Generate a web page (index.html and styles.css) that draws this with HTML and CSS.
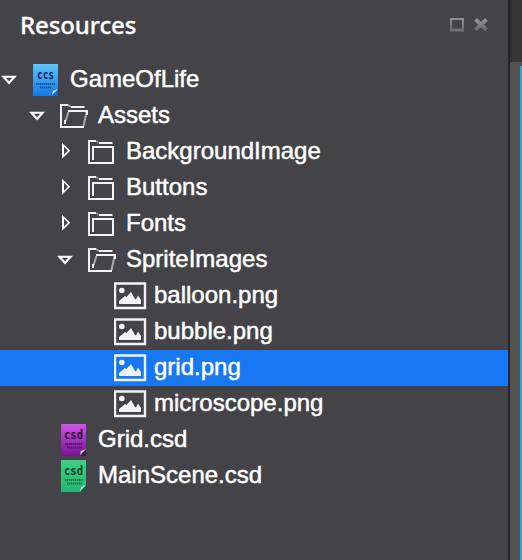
FILE: index.html
```html
<!DOCTYPE html>
<html lang="en">
<head>
<meta charset="utf-8">
<title>Resources</title>
<link rel="stylesheet" href="styles.css">
</head>
<body>
<svg width="0" height="0" class="defs">
  <defs>
    <linearGradient id="blue" x2="0" y2="1"><stop stop-color="#5cc5fa"/><stop offset="1" stop-color="#1478e0"/></linearGradient>
    <linearGradient id="purple" x2="0" y2="1"><stop stop-color="#cf55e8"/><stop offset="1" stop-color="#751393"/></linearGradient>
    <linearGradient id="green" x2="0" y2="1"><stop stop-color="#3ecf85"/><stop offset="1" stop-color="#22b873"/></linearGradient>
    <linearGradient id="metal" x2="0" y2="1"><stop stop-color="#929294"/><stop offset="1" stop-color="#6a6a6c"/></linearGradient>
    <symbol id="open" viewBox="0 0 30 36"><path d="M1 13.8H17L9 22.4Z" fill="#fff"/><path d="M5.8 15.8H12.2L9 19.3Z" fill="#444347"/></symbol>
    <symbol id="closed" viewBox="0 0 30 36"><path d="M6 8.7V24.7L14.2 16.7Z" fill="#fff"/><path d="M8 12.6V20.8L11.8 16.7Z" fill="#444347"/></symbol>
    <symbol id="folder" viewBox="0 0 40 36"><path d="M10 7L13 9" stroke="#8d8c90" stroke-width="2"/><path d="M26.5 9H13M10 7H3V29H27V13H7V26" fill="none" stroke="#f3f2f6" stroke-width="2"/></symbol>
    <symbol id="folder-open" viewBox="0 0 40 36"><path d="M10 7L13 9M7.5 23L10.5 14M28.6 14L25.5 28" fill="none" stroke="#a9a8ac" stroke-width="2"/><path d="M26.5 9H13M10 7H3V29H26M10 13H30M29 13V17M7 22V26" fill="none" stroke="#f3f2f6" stroke-width="2"/></symbol>
    <symbol id="picture" viewBox="0 0 40 36"><path d="M1 5.5H31V30H1Z" fill="none" stroke="#f3f2f6" stroke-width="2.4"/><circle cx="7.8" cy="12.5" r="2.8" fill="#f3f2f6"/><path d="M5 26V23L11 18L12.5 19L17 14L21 21L22 21.5L24 17.5L27 22V26Z" fill="#f3f2f6"/></symbol>
  </defs>
</svg>
<div class="app">
  <section class="panel">
    <header class="head">
      <h1>Resources</h1>
      <svg class="tools" width="42" height="18" viewBox="0 0 42 18">
        <path d="M1 2H13V13H1Z" fill="none" stroke="url(#metal)" stroke-width="2"/><path d="M0 13H14" stroke="#707072" stroke-width="3"/>
        <path d="M26 3.5L36 13.5M36 3.5L26 13.5" stroke="#353437" stroke-width="4"/>
        <path d="M25.5 2.5L36.5 13M36.5 2.5L25.5 13" stroke="url(#metal)" stroke-width="4"/>
      </svg>
    </header>
    <ul class="tree">
      <li class="row d0"><svg class="toggle"><use href="#open"/></svg><svg class="icon" viewBox="0 0 40 36"><path fill="url(#blue)" d="M3 2H28V34H3Z"/><text class="tag ccs" x="7" y="17" textLength="17" lengthAdjust="spacingAndGlyphs">ccs</text><path class="lines" stroke="#0c55a7" d="M6 22H25M10 25.5H21"/><path fill="#116bcc" d="M22 34L28 27V34Z"/><path fill="#d8f0ff" d="M22 33L23 29L28 27Z"/></svg><span>GameOfLife</span></li>
      <li class="row d1"><svg class="toggle"><use href="#open"/></svg><svg class="icon"><use href="#folder-open"/></svg><span>Assets</span></li>
      <li class="row d2"><svg class="toggle"><use href="#closed"/></svg><svg class="icon"><use href="#folder"/></svg><span>BackgroundImage</span></li>
      <li class="row d2"><svg class="toggle"><use href="#closed"/></svg><svg class="icon"><use href="#folder"/></svg><span>Buttons</span></li>
      <li class="row d2"><svg class="toggle"><use href="#closed"/></svg><svg class="icon"><use href="#folder"/></svg><span>Fonts</span></li>
      <li class="row d2"><svg class="toggle"><use href="#open"/></svg><svg class="icon"><use href="#folder-open"/></svg><span>SpriteImages</span></li>
      <li class="row d3"><svg class="toggle"></svg><svg class="icon"><use href="#picture"/></svg><span>balloon.png</span></li>
      <li class="row d3"><svg class="toggle"></svg><svg class="icon"><use href="#picture"/></svg><span>bubble.png</span></li>
      <li class="row d3 selected"><svg class="toggle"></svg><svg class="icon"><use href="#picture"/></svg><span>grid.png</span></li>
      <li class="row d3"><svg class="toggle"></svg><svg class="icon"><use href="#picture"/></svg><span>microscope.png</span></li>
      <li class="row d1"><svg class="toggle"></svg><svg class="icon" viewBox="0 0 40 36"><path fill="url(#purple)" d="M3 2H28V34H3Z"/><text class="tag" x="6" y="17" textLength="19" lengthAdjust="spacingAndGlyphs">csd</text><path class="lines" stroke="#5b1470" d="M7 22H25M9 25.5H24"/><path fill="#3c1748" d="M22 34L28 27V34Z"/><path fill="#efd9f5" d="M22 33L23 29L28 27Z"/></svg><span>Grid.csd</span></li>
      <li class="row d1"><svg class="toggle"></svg><svg class="icon" viewBox="0 0 40 36"><path fill="url(#green)" d="M3 2H28V34H3Z"/><text class="tag csd-green" x="6" y="17" textLength="19" lengthAdjust="spacingAndGlyphs">csd</text><path class="lines" stroke="#16774c" d="M7 22H25M9 25.5H24"/><path fill="#1d593d" d="M22 34L28 27V34Z"/><path fill="#d8f7e6" d="M22 33L23 29L28 27Z"/></svg><span>MainScene.csd</span></li>
    </ul>
  </section>
  <aside class="edge"><div class="edge-top"></div><div class="canvas"></div></aside>
</div>
</body>
</html>
```

FILE: styles.css
```css
* { box-sizing: border-box; }
body { margin: 0; background: #444347; color: #fff; font-family: "Liberation Sans", Arial, sans-serif; overflow: hidden; }
.defs { display: block; }
.app { display: flex; height: 560px; }
.panel { width: 508px; }
.head { height: 62px; display: flex; justify-content: space-between; padding: 7px 16px 0 20px; }
h1 { margin: 0; font: 500 24px/36px "Noto Sans", sans-serif; letter-spacing: -0.1px; -webkit-text-stroke: 0.3px #fff; }
.tools { margin-top: 10px; }
.tree { list-style: none; margin: 0; padding: 0; }
.row { display: flex; height: 36px; line-height: 33px; font-size: 24px; }
.row span { -webkit-text-stroke: 0.5px #fff; white-space: nowrap; }
.toggle { width: 30px; height: 36px; flex: none; }
.icon { width: 40px; height: 36px; flex: none; }
.d1 { padding-left: 28px; }
.d2 { padding-left: 56px; }
.d3 { padding-left: 84px; }
.selected { background: #1877f2; }
.tag { font: bold 12px "DejaVu Sans Mono", monospace; fill: #2b1234; }
.ccs { fill: #062458; }
.csd-green { fill: #103a2b; }
.lines { stroke-width: 2; stroke-dasharray: 1.5 0.5; fill: none; }
.edge { width: 14px; border-left: 2px solid #232224; background: #525252; display: flex; flex-direction: column; align-items: flex-end; }
.edge-top { width: 12px; height: 62px; background: #373737; border-left: 2px solid #303030; }
.canvas { width: 2px; flex: 1; margin-top: 4px; background: #25a9d8; }
```
